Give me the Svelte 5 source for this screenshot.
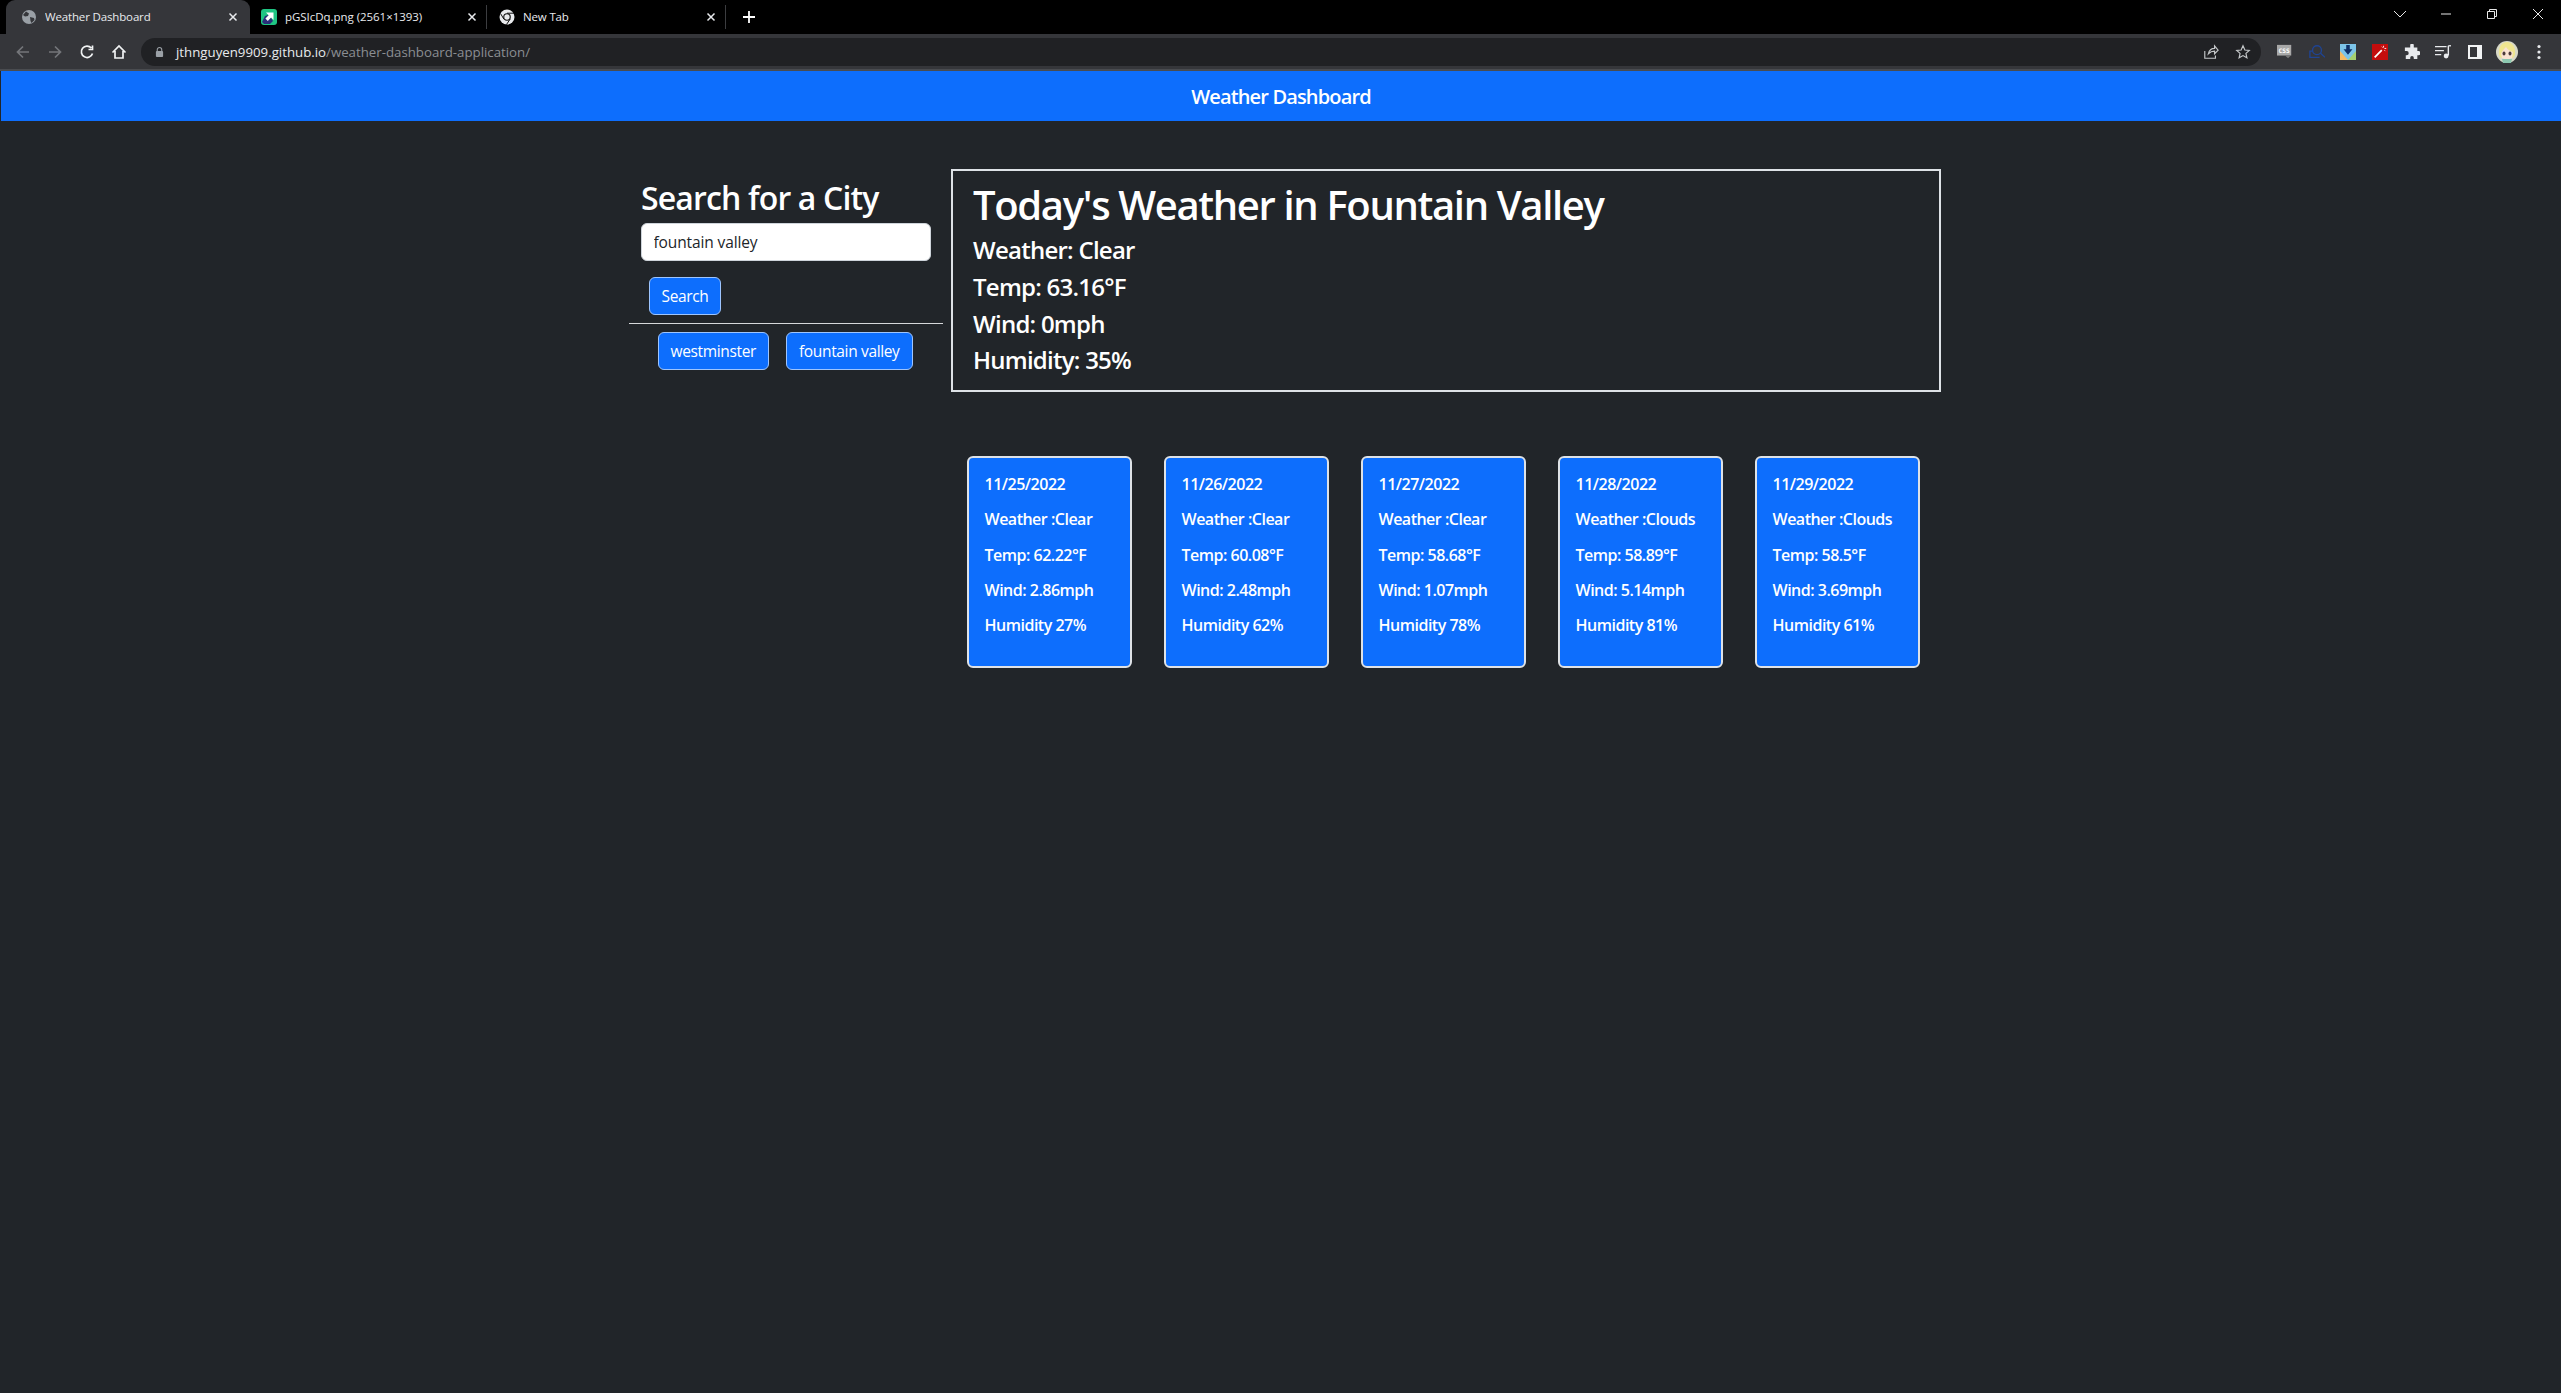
<script>
  const forecast = [
    { date: '11/25/2022', weather: 'Clear', temp: '62.22', wind: '2.86', humidity: '27' },
    { date: '11/26/2022', weather: 'Clear', temp: '60.08', wind: '2.48', humidity: '62' },
    { date: '11/27/2022', weather: 'Clear', temp: '58.68', wind: '1.07', humidity: '78' },
    { date: '11/28/2022', weather: 'Clouds', temp: '58.89', wind: '5.14', humidity: '81' },
    { date: '11/29/2022', weather: 'Clouds', temp: '58.5', wind: '3.69', humidity: '61' }
  ];
</script>

<div class="browser">
  <div class="tabstrip">
    <div class="tab active">
      <svg class="fav" viewBox="0 0 16 16"><circle cx="8" cy="8" r="7" fill="#9aa0a6"/><path d="M5 2.500l3 2-1 2.500-3 .5-2-1.500zM9 8l4 1 .5 2-3 3-1-2z" fill="#35363a"/></svg>
      <span class="title">Weather Dashboard</span>
      <svg class="x" viewBox="0 0 10 10"><path d="M1.500 1.500l7 7M8.500 1.500l-7 7"/></svg>
    </div>
    <div class="tab second">
      <svg class="fav" viewBox="0 0 16 16"><rect width="16" height="16" rx="3" fill="#1fc583"/><path d="M1 13l3-6 3-1 3 3 2 3-3 3H3z" fill="#2a2f7a"/><path d="M5 3.500h7.500V11l-2.400-2.400-3.300 3.300-2.400-2.400 3.300-3.300z" fill="#fff"/></svg>
      <span class="title">pGSIcDq.png (2561×1393)</span>
      <svg class="x" viewBox="0 0 10 10"><path d="M1.500 1.500l7 7M8.500 1.500l-7 7"/></svg>
    </div>
    <div class="tab third">
      <svg class="fav" viewBox="0 0 16 16"><circle cx="8" cy="8" r="7.500" fill="#e8eaed"/><circle cx="8" cy="8" r="3.800" fill="#111"/><circle cx="8" cy="8" r="2.700" fill="#e8eaed"/><path d="M8 4.200h7M4.800 10L1.500 4.500M11.200 10L7.500 15.500" stroke="#111" stroke-width="1" fill="none"/></svg>
      <span class="title">New Tab</span>
      <svg class="x" viewBox="0 0 10 10"><path d="M1.500 1.500l7 7M8.500 1.500l-7 7"/></svg>
    </div>
    <svg class="plus" viewBox="0 0 12 12"><path d="M6 0v12M0 6h12"/></svg>
    <div class="winctl">
      <svg class="wc" viewBox="0 0 14 14"><path d="M1 4l6 6 6-6"/></svg>
      <svg class="wc" viewBox="0 0 14 14"><path d="M2 7h10"/></svg>
      <svg class="wc" viewBox="0 0 14 14"><path d="M2.500 4.500h7v7h-7zM4.500 4.500V2.500h7v7h-2"/></svg>
      <svg class="wc" viewBox="0 0 14 14"><path d="M2 2l10 10M12 2L2 12"/></svg>
    </div>
  </div>
  <div class="toolbar">
    <div class="navbtns">
      <svg class="nb dim" viewBox="0 0 16 16"><path d="M14 8H2.500M8 2.500L2.500 8 8 13.500"/></svg>
      <svg class="nb dim" viewBox="0 0 16 16"><path d="M2 8h11.500M8 2.500L13.500 8 8 13.500"/></svg>
      <svg class="nb" viewBox="0 0 16 16"><path d="M13.500 9.500A5.700 5.700 0 1 1 12.300 4M13.500 1.500v4h-4"/></svg>
      <svg class="nb" viewBox="0 0 16 16"><path d="M1.500 8.500L8 2l6.500 6.500M4 7v7h8V7"/></svg>
    </div>
    <div class="omnibox">
      <svg class="lock" viewBox="0 0 10 12"><path d="M2.500 5V3.500a2.500 2.500 0 0 1 5 0V5" fill="none" stroke="#9aa0a6" stroke-width="1.200"/><rect x="1" y="5" width="8" height="6.500" rx="1" fill="#9aa0a6"/></svg>
      <span class="url"><b>jthnguyen9909.github.io</b><i>/weather-dashboard-application/</i></span>
      <svg class="omni share" viewBox="0 0 18 18"><path d="M2 8v8h12v-3M6 11c1-4 4-6 7-6V2l4 5-4 4V8c-3 0-5 1-7 3z"/></svg>
      <svg class="omni star" viewBox="0 0 18 18"><path d="M9 2l2.100 4.700 5 .5-3.800 3.400 1.100 5L9 13l-4.400 2.600 1.100-5L1.900 7.200l5-.5z"/></svg>
    </div>
    <div class="exts">
      <svg class="ext" viewBox="0 0 18 18"><rect y="1" width="16" height="12" fill="#a8a8a8"/><text x="8" y="10.500" class="csst">CSS</text><path d="M9 13l3.500 3 3-3z" fill="#777"/></svg>
      <svg class="ext lens" viewBox="0 0 18 18"><circle cx="9" cy="7" r="5"/><path d="M13 10.500l5 4.500M4 8H1v7h11"/></svg>
      <svg class="ext" viewBox="0 0 18 18"><rect width="18" height="18" fill="#7cc4e8"/><path d="M0 8l9 10H0z" fill="#f6bb62"/><path d="M18 8L9 18h9z" fill="#a5d16f"/><path d="M7 1h4v5h3l-5 6-5-6h3z" fill="#0f2f66"/></svg>
      <svg class="ext" viewBox="0 0 18 18"><rect width="18" height="18" fill="#c40d0d"/><path d="M3 15L11 7" stroke="#fff" stroke-width="2"/><path d="M13 2v2M16 5h-2M11 3l1 1M15 8l-1-1" stroke="#fff" stroke-width="1"/></svg>
      <svg class="ext" viewBox="0 0 18 18"><path d="M7 1.500a2 2 0 0 1 4 0V4h4v4h1.500a2.300 2.300 0 0 1 0 4.600H15V17h-4v-1.500a2 2 0 0 0-4 0V17H2v-4.400h1a2.300 2.300 0 0 0 0-4.600H1V4h6z" fill="#e8eaed"/></svg>
      <svg class="ext" viewBox="0 0 18 18"><path d="M0 3h13M0 7.500h10M0 12h7" stroke="#e8eaed" stroke-width="1.500"/><path d="M15 2v11" stroke="#e8eaed" stroke-width="1.600"/><path d="M15 2h3" stroke="#e8eaed" stroke-width="1.500"/><circle cx="12.500" cy="13.500" r="2.700" fill="#e8eaed"/></svg>
      <svg class="ext" viewBox="0 0 16 16"><rect x="1" y="1" width="14" height="14" fill="#f1f3f4"/><rect x="3" y="3" width="7" height="10" fill="#35363a"/></svg>
      <svg class="avatar" viewBox="0 0 22 22"><circle cx="11" cy="11" r="11" fill="#d8d9c8"/><path d="M3 14C2 6 6 1 11 1s9 5 8 13l-2 3H5z" fill="#efe58f"/><path d="M5 13c1-3 3-5 5-7 2 3 4 4 7 5l-1 6-5 2-5-2z" fill="#f8e2d2"/><ellipse cx="8" cy="12.500" rx="1.500" ry="2" fill="#4b3a3a"/><ellipse cx="14" cy="12.500" rx="1.500" ry="2" fill="#4b3a3a"/><path d="M6 18h10l-1 4H7z" fill="#8cc7b0"/></svg>
      <svg class="dots" viewBox="0 0 4 16"><circle cx="2" cy="2.500" r="1.600"/><circle cx="2" cy="8" r="1.600"/><circle cx="2" cy="13.500" r="1.600"/></svg>
    </div>
  </div>
</div>

<header class="navbar">Weather Dashboard</header>

<main class="container">
  <aside class="search">
    <h3>Search for a City</h3>
    <input class="city" type="text" value="fountain valley" />
    <button class="btn search-btn">Search</button>
    <hr />
    <div class="history">
      <button class="btn">westminster</button>
      <button class="btn">fountain valley</button>
    </div>
  </aside>

  <section class="results">
    <div class="today">
      <h1>Today's Weather in Fountain Valley</h1>
      <h4>Weather: Clear</h4>
      <h4>Temp: 63.16°F</h4>
      <h4>Wind: 0mph</h4>
      <h4>Humidity: 35%</h4>
    </div>
    <div class="cards">
      {#each forecast as day}
        <article class="card">
          <p>{day.date}</p>
          <p>Weather :{day.weather}</p>
          <p>Temp: {day.temp}°F</p>
          <p>Wind: {day.wind}mph</p>
          <p>Humidity {day.humidity}%</p>
        </article>
      {/each}
    </div>
  </section>
</main>

<style>
  :global(body) {
    margin: 0;
    background: #212529;
    min-height: 1393px;
    overflow: hidden;
    font-family: "Open Sans", "Noto Sans", sans-serif;
    color: #fff;
  }
  .browser { height: 71px; background: #35363a; }
  .tabstrip {
    height: 34px; background: #000; display: flex; align-items: stretch;
    padding-left: 6px; box-sizing: border-box;
  }
  .tab {
    display: flex; align-items: center; box-sizing: border-box;
    padding-left: 15px; font-size: 11.500px; color: #e8eaed; letter-spacing: -0.15px;
    width: 237px; border-right: 1px solid transparent;
  }
  .tab.active { width: 244px; background: #35363a; border-radius: 9px 9px 0 0; padding-left: 15px; }
  .tab.second { width: 237px; padding-left: 11px; border-right-color: #3c3d40; height: 24px; margin-top: 5px; letter-spacing: -0.04px; }
  .tab.third { width: 239px; padding-left: 12px; border-right-color: #3c3d40; height: 24px; margin-top: 5px; }
  .fav { width: 16px; height: 16px; flex: none; margin-right: 8px; }
  .title { flex: 1; white-space: nowrap; overflow: hidden; margin-top: -1px; }
  .x { width: 10px; height: 10px; flex: none; margin-right: 11px; fill: none; stroke: #e8eaed; stroke-width: 1.500; }
  .second .x, .third .x { margin-right: 9px; }
  .plus { width: 12px; height: 12px; margin: 11px 0 0 17px; fill: none; stroke: #fff; stroke-width: 1.800; }
  .winctl { margin-left: auto; display: flex; align-items: center; height: 28px; gap: 32px; padding-right: 16px; }
  .wc { width: 14px; height: 14px; fill: none; stroke: #e8e8e8; stroke-width: 1; }
  .toolbar {
    height: 37px; box-sizing: border-box; display: flex; align-items: center;
    border-bottom: 2px solid #4a4c50; padding: 0 0 0 15px;
  }
  .navbtns { display: flex; gap: 16px; width: 126px; flex: none; }
  .nb { width: 16px; height: 16px; fill: none; stroke: #f1f3f4; stroke-width: 1.700; }
  .nb.dim { stroke: #74767a; }
  .omnibox {
    width: 2120px; flex: none; height: 28px; border-radius: 14px; background: #202124;
    display: flex; align-items: center; padding: 0 10px 0 14px; box-sizing: border-box; margin-right: 16px;
  }
  .lock { width: 9px; height: 12px; flex: none; margin-right: 12px; }
  .url { flex: 1; font-size: 13.250px; white-space: nowrap; }
  .url b { font-weight: 400; color: #e8eaed; }
  .url i { font-style: normal; color: #8b8e93; }
  .omni { width: 16px; height: 16px; fill: none; stroke: #c4c7c9; stroke-width: 1.300; flex: none; margin-left: 16px; }
  .exts { display: flex; align-items: center; gap: 15.700px; }
  .ext { width: 16px; height: 16px; flex: none; }
  .lens { fill: none; stroke: #1f4494; stroke-width: 1.500; }
  .csst { font: 700 7px "DejaVu Sans Mono", monospace; fill: #fff; text-anchor: middle; }
  .avatar { width: 22px; height: 22px; margin-left: -3px; flex: none; }
  .dots { width: 4px; height: 16px; fill: #e8eaed; margin-left: 3px; flex: none; }

  .navbar {
    height: 50px; background: #0d6efd; display: flex; align-items: center; justify-content: center;
    font-size: 20px; font-weight: 600; letter-spacing: -0.85px; margin-left: 1px;
  }

  .container { width: 1320px; margin: 48px auto 0; display: flex; align-items: flex-start; }
  .search { width: 330px; flex: none; box-sizing: border-box; padding: 0 8px; }
  h3 {
    font-size: 32px; font-weight: 600; line-height: 38.400px; margin: 10px 0 6px 12.500px; letter-spacing: -0.85px; white-space: nowrap;
  }
  .city {
    display: block; box-sizing: border-box; width: 290px; height: 38px; margin-left: 12px;
    border: 1px solid #ced4da; border-radius: 6px; background: #fff; color: #212529;
    font: 400 15.500px "Open Sans", sans-serif; padding: 0 12px; letter-spacing: -0.12px;
  }
  .btn {
    background: #0d6efd; color: #fff; border: 1px solid #9ec5fe; border-radius: 6px; height: 38px;
    padding: 0 12px; font: 400 15.500px "Open Sans", sans-serif; letter-spacing: -0.35px; white-space: nowrap;
  }
  .search-btn { display: block; margin: 16px 0 0 20px; }
  hr { border: 0; border-top: 1px solid #d6d8da; margin: 8px 0; }
  .history { display: flex; gap: 17px; padding-left: 29px; }

  .results { width: 990px; flex: none; }
  .today {
    box-sizing: border-box; height: 223px; border: 2px solid #dee2e6; padding: 10px 20.500px;
  }
  h1 { font-size: 40px; font-weight: 600; line-height: 48px; margin: 0 0 7px; letter-spacing: -1.35px; white-space: nowrap; }
  h4 { font-size: 24px; font-weight: 600; line-height: 28.800px; margin: 0 0 8px; letter-spacing: -0.75px; white-space: nowrap; }
  .cards { display: flex; gap: 32px; margin: 64px 0 0 16px; }
  .card {
    box-sizing: border-box; width: 165px; height: 212px; background: #0d6efd;
    border: 2px solid #dee2e6; border-radius: 6px; padding: 17px 16px 16px;
  }
  .card p {
    margin: 0 0 16px; font-size: 16px; font-weight: 600; line-height: 19.300px; letter-spacing: -0.5px; white-space: nowrap;
  }
</style>
